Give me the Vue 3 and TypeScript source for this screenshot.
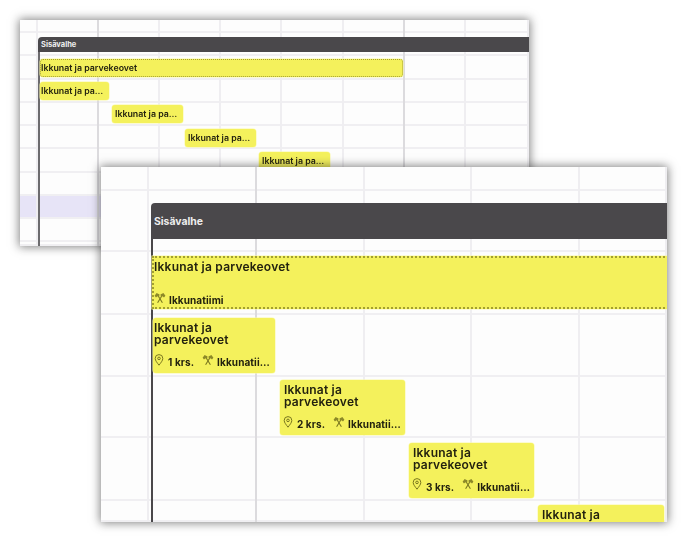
<script setup lang="ts">
interface Win {
  key: string
  columns: { w: number; strong?: boolean }[]
  rows: { h: number; tint?: boolean }[]
  inset: number
  chips: { offset: number; width: number; floor: string }[]
}

const windows: Win[] = [
  {
    key: 'back',
    columns: [
      { w: 18 }, { w: 61, strong: true }, { w: 61 }, { w: 61 }, { w: 61 }, { w: 62 },
      { w: 61, strong: true }, { w: 61 }, { w: 63 }
    ],
    rows: [
      { h: 13 }, { h: 23 }, { h: 24 }, { h: 23 }, { h: 23 }, { h: 23 }, { h: 24 }, { h: 23 },
      { h: 23, tint: true }, { h: 23 }, { h: 4 }
    ],
    inset: 18,
    chips: [
      { offset: 0, width: 69, floor: '1 krs.' },
      { offset: 72, width: 71, floor: '2 krs.' },
      { offset: 145, width: 71, floor: '3 krs.' },
      { offset: 219, width: 71, floor: '4 krs.' }
    ]
  },
  {
    key: 'front',
    columns: [
      { w: 48 }, { w: 108, strong: true }, { w: 108 }, { w: 107 }, { w: 108 }, { w: 87 }
    ],
    rows: [
      { h: 24 }, { h: 61 }, { h: 63 }, { h: 62 }, { h: 61 }, { h: 63 }, { h: 21 }
    ],
    inset: 50,
    chips: [
      { offset: 0, width: 122, floor: '1 krs.' },
      { offset: 127, width: 125, floor: '2 krs.' },
      { offset: 256, width: 125, floor: '3 krs.' },
      { offset: 385, width: 126, floor: '4 krs.' }
    ]
  }
]
</script>

<template>
  <div class="stage">
    <section v-for="win in windows" :key="win.key" class="window" :class="win.key">
      <div class="lines" aria-hidden="true">
        <div class="line-rows">
          <div
            v-for="(row, i) in win.rows"
            :key="i"
            class="line-row"
            :class="{ tint: row.tint }"
            :style="{ height: row.h + 'px' }"
          ></div>
        </div>
        <div class="line-cols">
          <div
            v-for="(col, i) in win.columns"
            :key="i"
            class="line-col"
            :class="{ strong: col.strong }"
            :style="{ width: col.w + 'px' }"
          ></div>
        </div>
      </div>

      <div class="phase" :style="{ marginLeft: win.inset + 'px' }">
        <header class="phase-head">Sisävalhe</header>
        <div class="lanes">
          <div class="lane first">
            <article class="task summary">
              <h3 class="title">Ikkunat ja parvekeovet</h3>
              <div class="meta">
                <span class="meta-item">
                  <svg class="icon tools" viewBox="0 0 12 12" aria-hidden="true">
                    <path class="handle" d="M3.6 3 8.4 10.8M8.4 3 3.6 10.8" />
                    <path class="head" d="M.6 3.8 2.6 1l3 1.6L5 5 3.4 4.2 2 5.4ZM11.4 3.8 9.4 1l-3 1.6L7 5l1.6-.8L10 5.4Z" />
                  </svg>
                  <span class="meta-text">Ikkunatiimi</span>
                </span>
              </div>
            </article>
          </div>
          <div v-for="chip in win.chips" :key="chip.offset" class="lane">
            <article class="task" :style="{ marginLeft: chip.offset + 'px', width: chip.width + 'px' }">
              <h3 class="title">Ikkunat ja parvekeovet</h3>
              <div class="meta">
                <span class="meta-item floor">
                  <svg class="icon pin" viewBox="0 0 10 12" aria-hidden="true">
                    <path d="M5 11.2C3.2 8.8 1.2 6.6 1.2 4.4a3.8 3.8 0 0 1 7.6 0C8.8 6.6 6.8 8.8 5 11.2Z" />
                    <circle cx="5" cy="4.4" r="1.3" />
                  </svg>
                  <span class="meta-text">{{ chip.floor }}</span>
                </span>
                <span class="meta-item team">
                  <svg class="icon tools" viewBox="0 0 12 12" aria-hidden="true">
                    <path class="handle" d="M3.6 3 8.4 10.8M8.4 3 3.6 10.8" />
                    <path class="head" d="M.6 3.8 2.6 1l3 1.6L5 5 3.4 4.2 2 5.4ZM11.4 3.8 9.4 1l-3 1.6L7 5l1.6-.8L10 5.4Z" />
                  </svg>
                  <span class="meta-text">Ikkunatiimi</span>
                </span>
              </div>
            </article>
          </div>
        </div>
      </div>
    </section>
  </div>
</template>

<style>
html, body { background: #fff; }
</style>

<style scoped>
.stage {
  position: relative;
  width: 688px;
  height: 542px;
  overflow: hidden;
  background: #fff;
  font-family: Inter, "Liberation Sans", sans-serif;
  color: #23220f;
}

.window {
  position: absolute;
  overflow: hidden;
  background: #fdfdfd;
  box-shadow: 0 0 9px 1px rgba(30, 30, 30, 0.55);
  filter: blur(0.35px);
}
.back { left: 20px; top: 20px; width: 509px; height: 226px; }
.front { left: 101px; top: 167px; width: 566px; height: 355px; }

.lines { position: absolute; inset: 0; }
.line-rows, .line-cols { position: absolute; inset: 0; }
.line-cols { display: flex; }
.line-row { box-sizing: border-box; border-bottom: 2px solid #f0eff2; }
.line-row.tint { background: #e7e4f7; }
.line-col { box-sizing: border-box; flex: none; border-right: 2px solid #efeef1; }
.line-col.strong { border-right-color: #dcdbde; }

.phase { position: relative; display: flex; flex-direction: column; height: 100%; box-sizing: border-box; }
.back .phase { padding-top: 17px; }
.front .phase { padding-top: 36px; }

.phase-head {
  display: flex;
  align-items: center;
  box-sizing: border-box;
  flex: none;
  background: #4a484b;
  color: #eeeeee;
  font-weight: 700;
  border-top-left-radius: 4px;
}
.back .phase-head { height: 15px; padding-left: 3px; font-size: 7.5px; }
.front .phase-head { height: 36px; padding-left: 3px; font-size: 10.4px; }

.lanes { flex: 1; display: flex; flex-direction: column; box-sizing: border-box; }
.back .lanes { border-left: 2px solid #6c6b6e; padding-top: 3px; }
.front .lanes { border-left: 2px solid #4a484b; padding-top: 12px; }

.lane { flex: none; box-sizing: border-box; }
.back .lane { height: 23.2px; padding-top: 4px; }
.front .lane { height: 62.3px; padding-top: 4px; }
.front .lane.first { padding-top: 5px; height: 63px; }

.task {
  box-sizing: border-box;
  display: flex;
  flex-direction: column;
  justify-content: space-between;
  background: #f4f15c;
  border-radius: 3px;
  overflow: hidden;
  box-shadow: 0 0 0 0.5px #fbf9a5;
}
.back .task { height: 18px; padding: 0 5px 0 1px; justify-content: center; }
.back .lane:nth-child(n + 3) .task { padding-left: 3px; }
.front .task { height: 55px; padding: 4px 3px 7px 4px; }
.front .task .meta { margin-left: -1px; }
.front .lane:nth-child(2) .task { padding-left: 1px; padding-right: 4px; }
.front .lane:nth-child(2) .task .meta { margin-left: 0; }

.task.summary { border: 1px dotted #a3a02f; }
.back .task.summary { width: 363px; padding: 0; }
.front .task.summary {
  width: 560px;
  height: 53px;
  margin-left: -1px;
  padding: 3px 1px 3px 0;
  border-width: 2px;
  border-right: 0;
  border-radius: 0;
}
.front .task.summary .meta { margin-left: 0; }

.title { margin: 0; font-weight: 600; }
.back .title {
  font-size: 8.8px;
  line-height: 12px;
  white-space: nowrap;
  overflow: hidden;
  text-overflow: ellipsis;
}
.front .title { font-size: 12px; line-height: 12px; letter-spacing: 0.22px; }

.back .meta { display: none; }
.front .meta { display: flex; align-items: center; gap: 8px; min-width: 0; }
.meta-item { display: flex; align-items: center; gap: 3px; min-width: 0; }
.floor { flex: none; gap: 4px; }
.team { flex: 1; }
.meta-text {
  font-size: 10px;
  font-weight: 700;
  line-height: 13px;
  letter-spacing: 0.1px;
  white-space: nowrap;
  overflow: hidden;
  text-overflow: ellipsis;
  position: relative;
  top: 3px;
}

.icon { flex: none; fill: none; stroke: #7a771f; stroke-width: 1; }
.icon .handle { stroke-width: 1.1; }
.icon .head { fill: #8c8928; stroke: none; }
.pin { width: 10px; height: 12px; }
.tools { width: 12px; height: 12px; }
</style>
